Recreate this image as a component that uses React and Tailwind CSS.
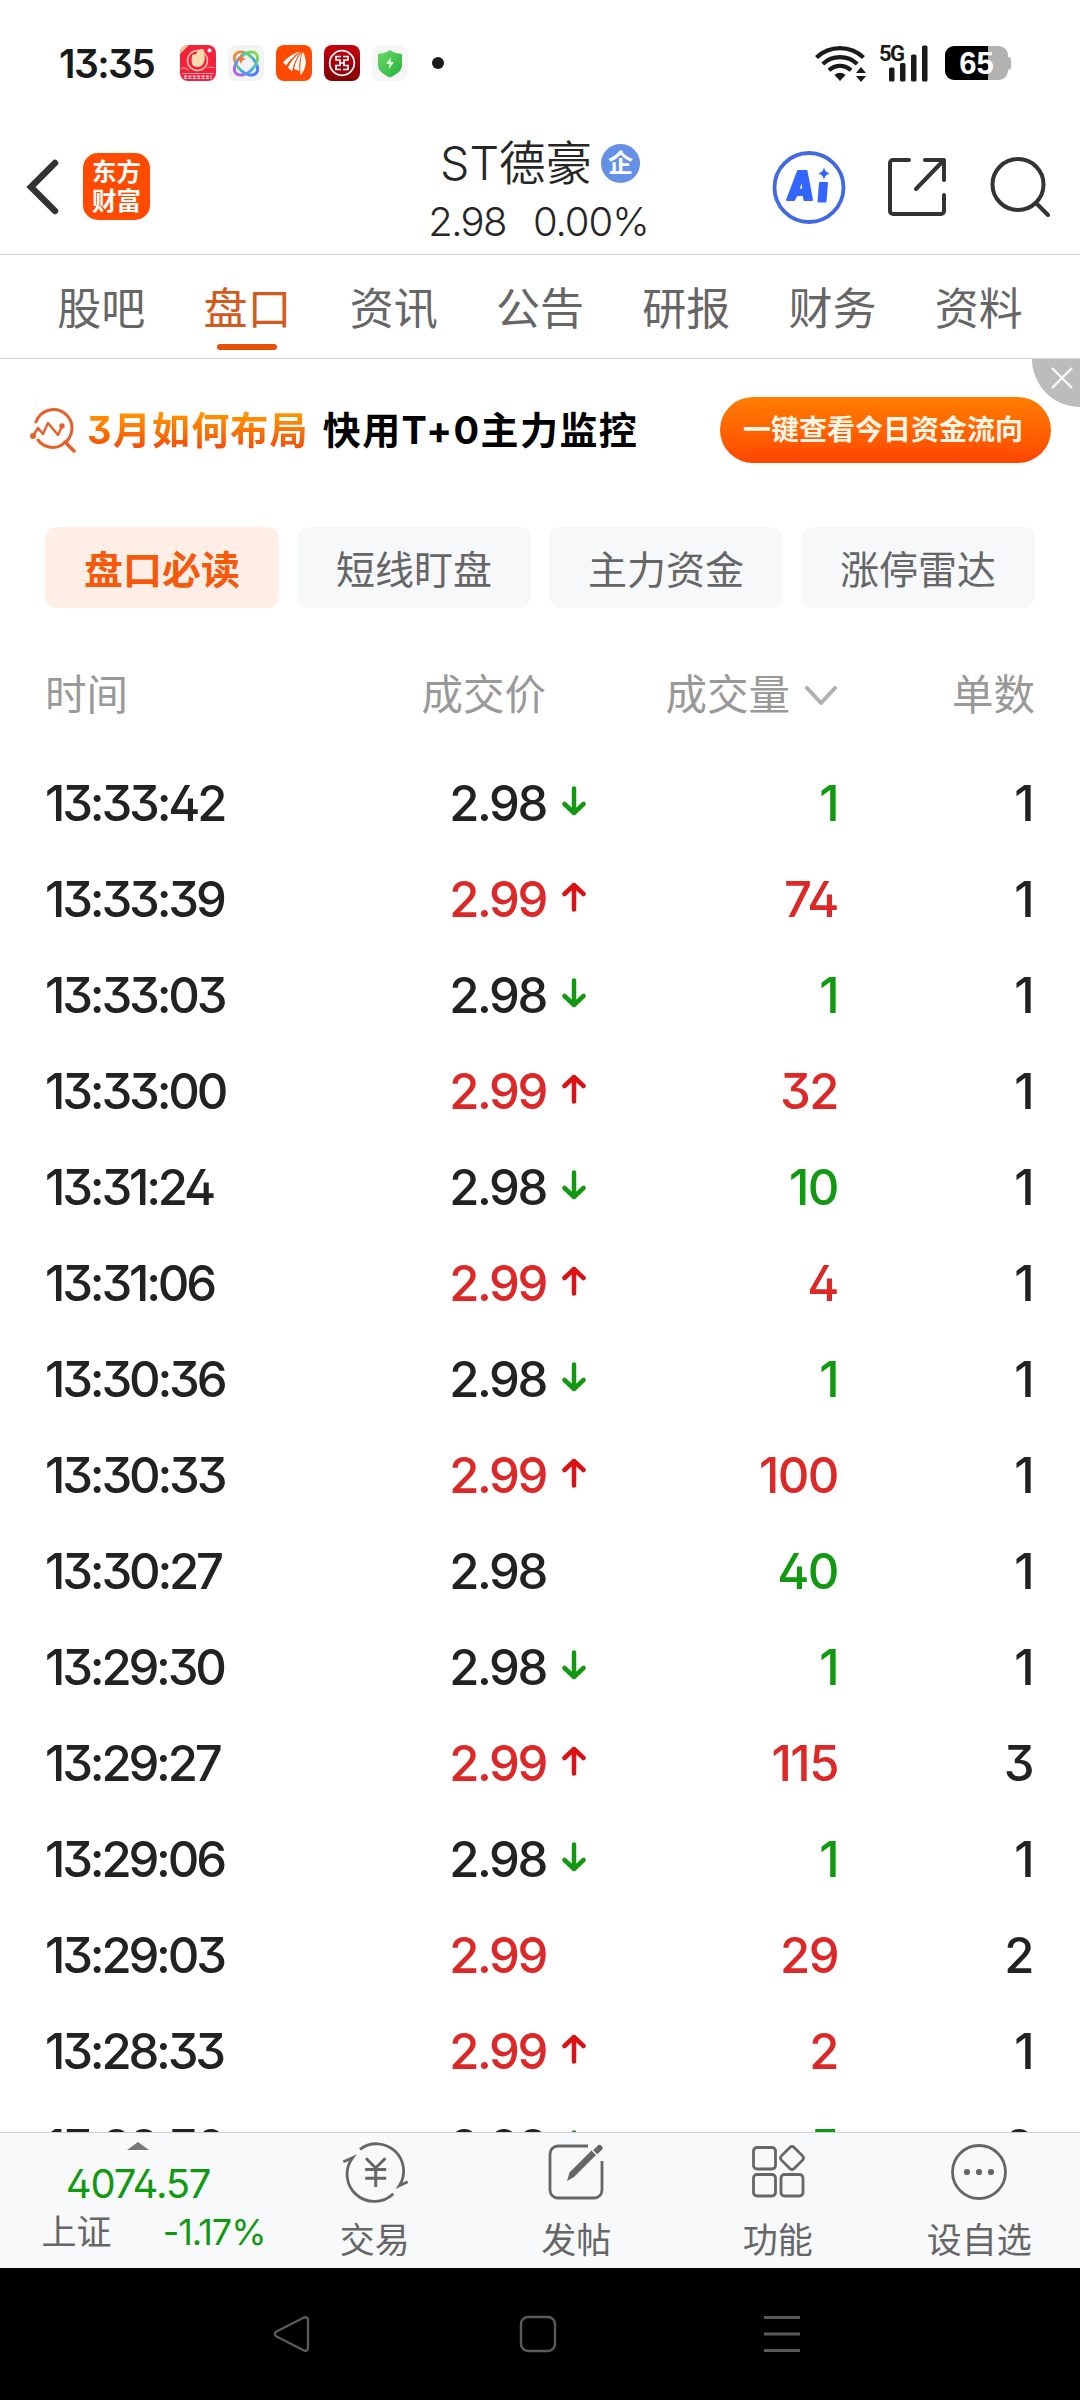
import React from 'react'

const tabs = ['股吧', '盘口', '资讯', '公告', '研报', '财务', '资料']
const chips = ['盘口必读', '短线盯盘', '主力资金', '涨停雷达']

const trades = [
  { time: '13:33:42', price: '2.98', dir: 'down', volume: '1', side: 'sell', count: 1 },
  { time: '13:33:39', price: '2.99', dir: 'up', volume: '74', side: 'buy', count: 1 },
  { time: '13:33:03', price: '2.98', dir: 'down', volume: '1', side: 'sell', count: 1 },
  { time: '13:33:00', price: '2.99', dir: 'up', volume: '32', side: 'buy', count: 1 },
  { time: '13:31:24', price: '2.98', dir: 'down', volume: '10', side: 'sell', count: 1 },
  { time: '13:31:06', price: '2.99', dir: 'up', volume: '4', side: 'buy', count: 1 },
  { time: '13:30:36', price: '2.98', dir: 'down', volume: '1', side: 'sell', count: 1 },
  { time: '13:30:33', price: '2.99', dir: 'up', volume: '100', side: 'buy', count: 1 },
  { time: '13:30:27', price: '2.98', dir: null, volume: '40', side: 'sell', count: 1 },
  { time: '13:29:30', price: '2.98', dir: 'down', volume: '1', side: 'sell', count: 1 },
  { time: '13:29:27', price: '2.99', dir: 'up', volume: '115', side: 'buy', count: 3 },
  { time: '13:29:06', price: '2.98', dir: 'down', volume: '1', side: 'sell', count: 1 },
  { time: '13:29:03', price: '2.99', dir: null, volume: '29', side: 'buy', count: 2 },
  { time: '13:28:33', price: '2.99', dir: 'up', volume: '2', side: 'buy', count: 1 },
  { time: '13:28:30', price: '2.98', dir: 'down', volume: '5', side: 'sell', count: 2 }
]

const StatusBar = () => (
  <div className="flex items-center h-[126px] shrink-0 pl-[59px] pr-[69px]">
    <span className="w-[121px] text-[39px] font-semibold tracking-[-1.6px] text-[#1a1a1a] leading-none">13:35</span>
    <div className="flex gap-3">
      <svg width="36" height="36" viewBox="0 0 36 36">
        <rect width="36" height="36" rx="8" fill="#f5203c" />
        <path d="M0 9 9 0H8A8 8 0 0 0 0 8z" fill="#f3cf95" />
        <circle cx="17.5" cy="15.5" r="10" fill="none" stroke="#ffd0a8" strokeWidth="1.4" />
        <path d="M12 11c0-2 2-1 4-2 1-1 2-5 5-5s4 2 3 5c1 3 1 5 0 8-1 4-4 5-7 5-5 0-6-4-5-11z" fill="#ffd9ae" />
        <circle cx="29.500" cy="5.500" r="2" fill="#fff" />
        <path d="M1 24c3-3 5 0 8 1M27 23c3-2 5-1 8 0" stroke="#ff8b96" strokeWidth="1.2" fill="none" />
        <rect x="2" y="28" width="32" height="1" fill="#ff9aa5" />
        <path d="M4 31.200h28M4 33.400h28" stroke="#ffe3e6" strokeWidth="1.4" strokeDasharray="3 1.4" />
      </svg>
      <svg width="36" height="36" viewBox="0 0 36 36">
        <defs>
          <linearGradient id="orbit" x1="0" y1="0" x2="1" y2="0">
            <stop offset="0" stopColor="#f58a3c" />
            <stop offset="0.35" stopColor="#5ccf6a" />
            <stop offset="0.65" stopColor="#3fa0f0" />
            <stop offset="1" stopColor="#4f7df5" />
          </linearGradient>
          <linearGradient id="orbit2" x1="1" y1="0" x2="0" y2="0">
            <stop offset="0" stopColor="#8fd84a" />
            <stop offset="0.5" stopColor="#35b9e8" />
            <stop offset="1" stopColor="#b45bf0" />
          </linearGradient>
        </defs>
        <rect width="36" height="36" rx="8" fill="#f3f3f5" />
        <ellipse cx="18" cy="18.5" rx="14" ry="8.5" transform="rotate(45 18 18.5)" fill="none" stroke="url(#orbit)" strokeWidth="3" />
        <ellipse cx="18" cy="18.5" rx="14" ry="8.5" transform="rotate(-45 18 18.5)" fill="none" stroke="url(#orbit2)" strokeWidth="3" />
        <path d="m13 9 1.500 3.500L18 14l-3.500 1.500L13 19l-1.500-3.500L8 14l3.500-1.500z" fill="#f7743a" />
      </svg>
      <svg width="36" height="36" viewBox="0 0 36 36">
        <rect width="36" height="36" rx="8" fill="#ff4a00" />
        <g fill="#fff">
          <path d="M24 6.500C17 8.500 12 12 7 17.500L10 20.500C14 15 18 10.500 24 6.500z" />
          <path d="M25 7C19 11 15 16 12 22.500L16 26.500C17.500 18.500 20.500 12 25 7z" />
          <path d="M26 7C22 12 19.500 17 18 24L23.500 26C22.500 19 24 12.500 26 7z" />
          <path d="M27 7C24.500 13 24 19 24.500 30.500 31 23 31 14 27 7z" />
        </g>
      </svg>
      <svg width="36" height="36" viewBox="0 0 36 36">
        <defs>
          <linearGradient id="bank" x1="0" y1="0" x2="0" y2="1">
            <stop offset="0" stopColor="#c8000f" />
            <stop offset="1" stopColor="#820003" />
          </linearGradient>
        </defs>
        <rect width="36" height="36" rx="8" fill="url(#bank)" />
        <circle cx="18" cy="18" r="12.300" fill="none" stroke="#fff" strokeWidth="1.700" />
        <path d="M17 11.500h-5v3.500h4v5.500h-4V24.500h5M19 11.500h5v3.500h-4v5.500h4V24.500h-5M16 18h4" stroke="#fff" strokeWidth="1.700" fill="none" />
      </svg>
      <svg width="36" height="36" viewBox="0 0 36 36">
        <defs>
          <linearGradient id="shield" x1="0" y1="0" x2="1" y2="1">
            <stop offset="0" stopColor="#6bd968" />
            <stop offset="1" stopColor="#25b23d" />
          </linearGradient>
        </defs>
        <rect width="36" height="36" rx="8" fill="#f6f7f6" />
        <path d="M18 5c4 3 8 3.500 12 4v11c0 6-6 10-12 12.500C12 30 6 26 6 20V9c4-.5 8-1 12-4z" fill="url(#shield)" />
        <path d="m19 12-5 7h3.500L16.500 24.500l5.500-7.500h-3.500z" fill="#e6fbe0" />
      </svg>
    </div>
    <span className="w-3 h-3 ml-6 rounded-full bg-[#1a1a1a]" />
    <div className="flex items-center ml-auto">
      <svg width="52" height="38" viewBox="0 0 52 38">
        <g fill="none" stroke="#1a1a1a" strokeWidth="4.200">
          <path d="M1.500 13.500a34 34 0 0 1 47 0" />
          <path d="M7.800 20a25 25 0 0 1 34.400 0" />
          <path d="M14 26.300a16 16 0 0 1 22 0" />
        </g>
        <path d="M19.500 31a8 8 0 0 1 11 0L25 37z" fill="#1a1a1a" />
        <path d="m46 23 5 6H41zM46 38l5-6H41z" fill="#1a1a1a" />
      </svg>
      <div className="relative w-[49px] h-[38px] ml-3">
        <span className="absolute left-0 -top-px text-[22px] font-bold leading-none tracking-[-1.5px] text-[#1a1a1a] [font-family:'Roboto',sans-serif]">5G</span>
        <svg width="49" height="38" viewBox="0 0 49 38" fill="#1a1a1a">
          <rect x="10" y="23.500" width="5.500" height="14" rx="1.500" />
          <rect x="21" y="19" width="5.500" height="18.500" rx="1.500" />
          <rect x="32" y="10.500" width="5.500" height="27" rx="1.500" />
          <rect x="43" y="1.500" width="5.500" height="36" rx="1.500" />
        </svg>
      </div>
      <div className="flex items-center ml-[17px]">
        <div className="relative flex w-[63px] h-[34px] rounded-[9px] overflow-hidden bg-[#b2b2b2]">
          <div className="w-[43px] bg-black" />
          <span className="absolute inset-0 flex items-center justify-center text-[31px] font-bold leading-none text-white [font-family:'Liberation_Sans',sans-serif]">65</span>
        </div>
        <div className="w-[3px] h-[13px] rounded-r-[3px] bg-[#b2b2b2]" />
      </div>
    </div>
  </div>
)

const TitleBar = () => (
  <header className="relative flex items-center h-[129px] shrink-0 pl-[26px] pr-[29px] pb-[7px] border-b border-[#d2d2d2]">
    <svg width="34" height="58" viewBox="0 0 34 58" fill="none" stroke="#333" strokeWidth="6.500" strokeLinecap="round">
      <path d="M29 5 5 29l24 24" />
    </svg>
    <div className="flex flex-col items-center justify-center w-[67px] h-[67px] ml-[23px] rounded-[15px] bg-[#ff4a00] text-white text-[24.500px] leading-[29px] font-bold">
      <span>东方</span>
      <span>财富</span>
    </div>
    <div className="absolute inset-x-0 top-[6px] flex flex-col items-center text-[#262626]">
      <div className="flex items-center h-[62px] text-[46.500px] font-[350]">
        <span className="leading-none">ST德豪</span>
        <span className="flex items-center justify-center w-[39px] h-[39px] ml-[9px] rounded-full bg-[#668fe6] text-white text-[25px] font-bold leading-none">企</span>
      </div>
      <div className="flex gap-[27px] pr-[3px] text-[40px] font-[350] leading-[56px] tracking-[-1.6px]">
        <span>2.98</span>
        <span className="tracking-[-1px]">0.00%</span>
      </div>
    </div>
    <div className="flex items-center ml-auto">
      <svg width="74" height="74" viewBox="0 0 74 74">
        <circle cx="37" cy="37.500" r="34.500" fill="none" stroke="#4169e1" strokeWidth="3.800" />
        <g fill="#3366ff" stroke="#3366ff" strokeWidth="2" strokeLinejoin="round">
          <path fillRule="evenodd" d="M26 21h8.500L40 50h-7.500l-.8-5h-7.200l-2.500 5H15zM30 29l-3.500 10.500h5z" />
          <path d="M48 33h7l-1.500 18.500h-7z" />
        </g>
        <path d="M52 17.500c1 3.500 2.500 5 6 6-3.500 1-5 2.500-6 6-1-3.500-2.500-5-6-6 3.500-1 5-2.500 6-6z" fill="#3366ff" />
      </svg>
      <svg className="ml-[41px]" width="60" height="60" viewBox="0 0 60 60" fill="none" stroke="#333" strokeWidth="4" strokeLinecap="round" strokeLinejoin="round">
        <path d="M22 3H6a3 3 0 0 0-3 3v48a3 3 0 0 0 3 3h48a3 3 0 0 0 3-3V38" />
        <path d="M38 3h19v20M56 4 29 32" />
      </svg>
      <svg className="ml-[43px]" width="61" height="61" viewBox="0 0 61 61" fill="none" stroke="#333" strokeWidth="4" strokeLinecap="round">
        <circle cx="28" cy="28.500" r="25.500" />
        <path d="m46 47 12 12" />
      </svg>
    </div>
  </header>
)

const Tabs = () => (
  <nav className="flex h-[104px] shrink-0 px-7 border-b border-[#d2d2d2] text-[44px] text-[#666]">
    {tabs.map((tab) => (
      <div key={tab} className={`flex-1 flex flex-col items-center ${tab === '盘口' ? 'text-[#d35a1c]' : ''}`}>
        <span className="h-[89px] leading-[109px]">{tab}</span>
        {tab === '盘口' && <span className="w-[60px] h-[6px] rounded-full bg-[#e6520a]" />}
      </div>
    ))}
  </nav>
)

const Banner = () => (
  <section className="relative flex items-center h-[142px] shrink-0 pl-[29px] pr-[29px]">
    <svg width="48" height="46" viewBox="0 0 48 46" fill="none" stroke="#e5602a" strokeWidth="3" strokeLinecap="round" strokeLinejoin="round">
      <path d="M7 15a18.500 18.500 0 1 1 26 22.500M9 33a18.500 18.500 0 0 0 24 5" />
      <path d="m36 35 9 9" strokeWidth="3.500" />
      <path d="m4 29 5-8 5 6 5-11 10 12 4-9" strokeWidth="2.400" />
      <circle cx="4" cy="29" r="1.500" fill="#e5602a" />
      <circle cx="33" cy="19" r="1.200" fill="#e5602a" />
    </svg>
    <span className="ml-[10px] text-[38px] font-bold leading-[56px] tracking-[1.2px] bg-linear-to-b from-[#ff9500] from-20% to-[#f2500a] to-80% bg-clip-text text-transparent">3月如何布局</span>
    <span className="ml-[14px] text-[38px] font-bold leading-[56px] tracking-[1.4px] text-black whitespace-nowrap">快用T+0主力监控</span>
    <button className="flex items-center justify-center w-[331px] h-[66px] ml-auto pr-[5px] rounded-full bg-linear-to-b from-[#ff7d00] to-[#ff4400] text-[28px] font-bold text-[#fff6e8] whitespace-nowrap">一键查看今日资金流向</button>
    <div className="absolute right-0 top-0 flex items-center justify-center w-12 h-12 pl-[12px] pb-[11px] rounded-bl-full bg-[#bcbcbc]">
      <svg width="22" height="22" viewBox="0 0 22 22" stroke="#fff" strokeWidth="2.200">
        <path d="m1 1 20 20M21 1 1 21" />
      </svg>
    </div>
  </section>
)

const Arrow = ({ dir }) => {
  if (!dir) return null
  return (
    <svg
      className={dir === 'up' ? 'text-[#dd1111]' : 'rotate-180 text-[#119911]'}
      width="24" height="30" viewBox="0 0 24 30" fill="none" stroke="currentColor" strokeWidth="4.500" strokeLinecap="round" strokeLinejoin="round"
    >
      <path d="M12 27.500V3M2.500 12 12 3l9.500 9" />
    </svg>
  )
}

const TradeTable = () => (
  <section className="flex-1 min-h-0 overflow-hidden px-[45px]">
    <div className="grid grid-cols-[300px_201px_291px_198px] items-center h-[78px] mt-[49px] mb-[20px] text-[41.500px] text-[#999] leading-none">
      <span>时间</span>
      <span className="text-right">成交价</span>
      <span className="flex items-center justify-end">
        成交量
        <svg className="ml-[15px]" width="32" height="20" viewBox="0 0 32 20" fill="none" stroke="#b0b0b0" strokeWidth="4" strokeLinecap="round" strokeLinejoin="round">
          <path d="m2 2 14 15L30 2" />
        </svg>
      </span>
      <span className="text-right">单数</span>
    </div>
    {trades.map((trade) => (
      <div key={trade.time} className="grid grid-cols-[300px_201px_40px_252px_195px] items-center h-24 text-[49px] font-medium tracking-[-1.5px] text-[#222] leading-none">
        <span className="tracking-[-3.2px]">{trade.time}</span>
        <span className={`text-right tracking-[-2.4px] ${trade.price === '2.99' ? 'text-[#dd2828]' : ''}`}>{trade.price}</span>
        <span className="flex justify-end pb-[5px]">
          <Arrow dir={trade.dir} />
        </span>
        <span className={`text-right ${trade.side === 'buy' ? 'text-[#dd2828]' : 'text-[#119911]'}`}>{trade.volume}</span>
        <span className="text-right">{trade.count}</span>
      </div>
    ))}
  </section>
)

const TradeIcon = () => (
  <svg width="68" height="62" viewBox="0 0 68 62" fill="none" stroke="#666" strokeWidth="2.800">
    <path d="M19 8.300A27.200 27.200 0 0 1 58.300 44.700l8.400-4" />
    <path d="M52.300 52.700A27.200 27.200 0 0 1 11.700 16.700l-9.400 4" />
    <path d="m25 17.300 9.700 9.700 9.700-9.700M34.700 27v19M24.200 28.500h21M24.200 37.300h21" strokeWidth="3" />
  </svg>
)

const PostIcon = () => (
  <svg width="58" height="62" viewBox="0 0 58 62" fill="none" stroke="#666" strokeWidth="2.800">
    <path d="M41 5H11a8 8 0 0 0-8 8v36a8 8 0 0 0 8 8h36a8 8 0 0 0 8-8V20" />
    <path d="M20 40l2.500-8.500L45 9l4.500 4.500L27 36z" fill="#666" stroke="none" />
    <path d="m48.500 11 4-4" strokeWidth="6" strokeLinecap="round" />
    <path d="m45 9 5 5" stroke="#f7f9fb" strokeWidth="1.500" />
  </svg>
)

const FeatureIcon = () => (
  <svg width="56" height="62" viewBox="0 0 56 62" fill="none" stroke="#666" strokeWidth="2.800">
    <rect x="3.500" y="6.500" width="22" height="21.500" rx="3.500" />
    <rect x="3.500" y="33.500" width="22" height="21.500" rx="3.500" />
    <rect x="31" y="33.500" width="22" height="21.500" rx="3.500" />
    <rect x="33" y="8" width="18" height="18" rx="3" transform="rotate(45 42 17)" />
  </svg>
)

const MoreIcon = () => (
  <svg width="58" height="62" viewBox="0 0 58 62">
    <circle cx="29" cy="31" r="26.500" fill="none" stroke="#666" strokeWidth="2.800" />
    <g fill="#666">
      <circle cx="17" cy="31" r="3.100" />
      <circle cx="29" cy="31" r="3.100" />
      <circle cx="41" cy="31" r="3.100" />
    </g>
  </svg>
)

const actions = [
  { label: '交易', Icon: TradeIcon },
  { label: '发帖', Icon: PostIcon },
  { label: '功能', Icon: FeatureIcon },
  { label: '设自选', Icon: MoreIcon }
]

const BottomBar = () => (
  <footer className="flex h-[136px] shrink-0 bg-[#f7f9fb] border-t border-[#cfd2d4] text-[#666]">
    <div className="flex flex-col items-center w-[274px] pt-[9px] pl-[2px]">
      <svg width="22" height="8" viewBox="0 0 22 8">
        <path d="M0 8 11 0l11 8z" fill="#77787a" />
      </svg>
      <span className="mt-[8px] text-[40px] leading-[52px] tracking-[-1.2px] text-[#119911]">4074.57</span>
      <div className="flex items-center justify-between w-[224px] ml-[31px] text-[35px] leading-[44px]">
        <span>上证</span>
        <span className="text-[36px] tracking-[-1px] text-[#119911]">-1.17%</span>
      </div>
    </div>
    {actions.map(({ label, Icon }) => (
      <div key={label} className="flex-1 flex flex-col items-center pt-[8px]">
        <Icon />
        <span className="mt-[11px] text-[35px] leading-[52px]">{label}</span>
      </div>
    ))}
  </footer>
)

const SystemNav = () => (
  <div className="flex items-center h-[132px] shrink-0 pl-[273px] gap-[208px] bg-black">
    <svg width="38" height="38" viewBox="0 0 38 38" fill="none" stroke="#5a5a5a" strokeWidth="2.400" strokeLinejoin="round">
      <path d="M3.500 16.500 31 2.500q4-1 4 3v27q0 4-4 3L3.500 21.500q-3.500-2.500 0-5z" />
    </svg>
    <svg width="38" height="38" viewBox="0 0 38 38" fill="none" stroke="#5a5a5a" strokeWidth="2.400">
      <rect x="2" y="2" width="34" height="34" rx="7" />
    </svg>
    <svg className="-ml-[2px]" width="38" height="38" viewBox="0 0 38 38" stroke="#5a5a5a" strokeWidth="2.800">
      <path d="M1 2.500h36M1 19h36M1 35.500h36" />
    </svg>
  </div>
)

const App = () => {
  return (
    <div className="flex flex-col w-[1080px] h-[2400px] overflow-hidden bg-white [font-family:'Inter','Noto_Sans_CJK_SC',sans-serif] [font-feature-settings:'cv02','cv09']">
      <StatusBar />
      <TitleBar />
      <Tabs />
      <Banner />
      <div className="flex gap-[18px] shrink-0 mt-[26px] px-[45px]">
        {chips.map((chip, i) => (
          <button
            key={chip}
            className={`flex-1 h-[81px] pt-[3px] rounded-xl text-[39px] leading-none ${i === 0 ? 'bg-[#ffeee6] text-[#f5590b] font-bold' : 'bg-[#f7f8fa] text-[#666]'}`}
          >
            {chip}
          </button>
        ))}
      </div>
      <TradeTable />
      <BottomBar />
      <SystemNav />
    </div>
  )
}

export default App
